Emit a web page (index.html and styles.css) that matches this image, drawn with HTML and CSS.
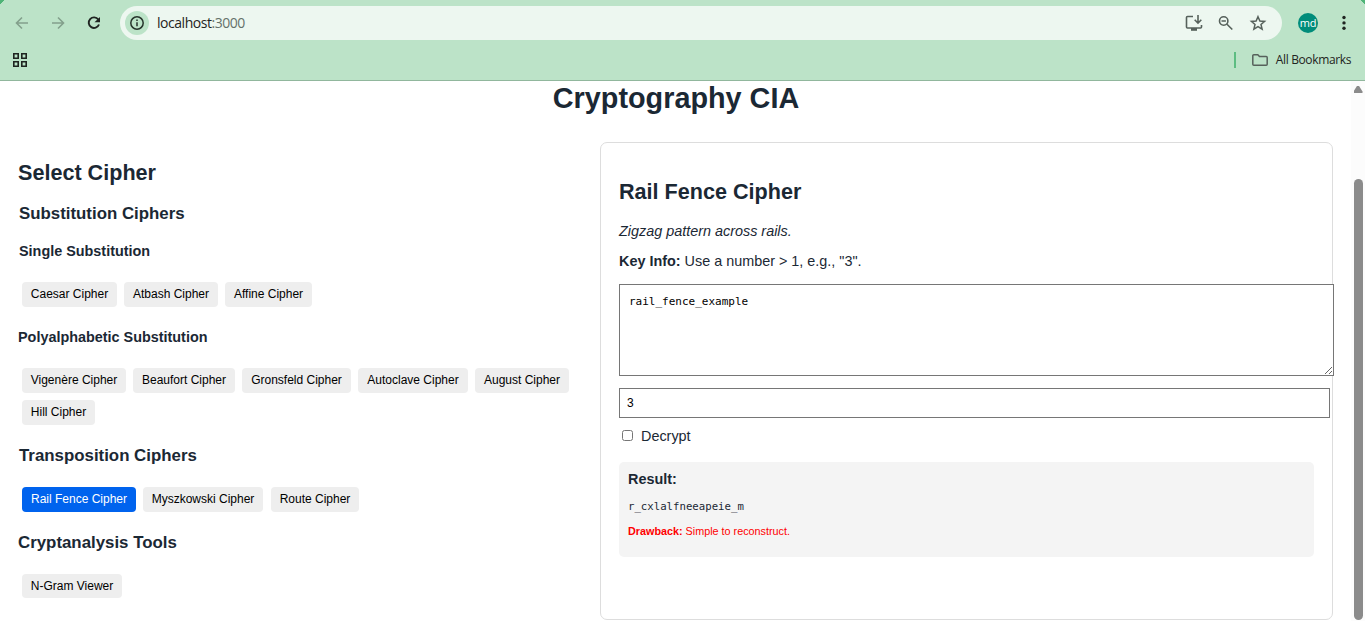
FILE: index.html
```html
<!DOCTYPE html>
<html lang="en">
<head>
<meta charset="utf-8">
<title>Cryptography CIA</title>
<link rel="stylesheet" href="styles.css">
</head>
<body>
<header class="browser">
  <div class="toolbar">
    <svg class="nav-icons" width="120" height="46" viewBox="0 0 120 46" fill="none">
      <path d="M28 23H17M22 17.5L16.5 23l5.500 5.500" stroke="#83a08c" stroke-width="1.600"/>
      <path d="M52 23h11M58 17.500l5.500 5.500-5.500 5.500" stroke="#83a08c" stroke-width="1.600"/>
      <path d="M98.300 19.500A5.300 5.300 0 1 0 99 24.500" stroke="#1f2421" stroke-width="1.900"/>
      <path d="M100 17v5.300h-5.500z" fill="#1f2421"/>
    </svg>
    <div class="address">
      <span class="info"><svg width="16" height="16" viewBox="0 0 16 16" fill="none" stroke="#26332b" stroke-width="1.500"><circle cx="8" cy="8" r="6.200"/><path d="M8 7.200v4M8 4.500v1.500"/></svg></span>
      <span class="url">localhost<span class="port">:3000</span></span>
      <svg class="address-icons" width="96" height="34" viewBox="0 0 96 34" fill="none" stroke="#56615b" stroke-width="1.600">
        <path d="M13 10.500H7.500a1 1 0 0 0-1 1v9.500a1 1 0 0 0 1 1h13a1 1 0 0 0 1-1V19M18 9v8M14.700 13.700l3.300 3.500 3.300-3.500"/>
        <path d="M11 22h6v2.800h-6z" fill="#56615b" stroke="none"/>
        <circle cx="43.700" cy="15" r="4.200"/><path d="M47 18.300l5.300 5.200M41.500 15h4.400"/>
        <path d="M78 10.700l1.900 4.300 4.700.4-3.600 3.100 1.100 4.600-4.100-2.500-4.100 2.500 1.100-4.600-3.600-3.100 4.700-.4z" stroke-width="1.500"/>
      </svg>
    </div>
    <span class="avatar">md</span>
    <svg class="more" width="6" height="16" viewBox="0 0 6 16" fill="#1f2421"><circle cx="3" cy="2.500" r="1.700"/><circle cx="3" cy="7.900" r="1.700"/><circle cx="3" cy="13.300" r="1.700"/></svg>
  </div>
  <div class="bookmarks">
    <svg width="14" height="14" viewBox="0 0 14 14" fill="none" stroke="#1f2421" stroke-width="1.600"><path d="M.8.800h4.400v4.400H.8zM8.800.800h4.400v4.400H8.800zM.8 8.800h4.400v4.400H.8zM8.800 8.800h4.400v4.400H8.800z"/></svg>
    <div class="all-bookmarks">
      <span class="divider"></span>
      <svg width="16" height="12" viewBox="0 0 16 12" fill="none" stroke="#56615b" stroke-width="1.500"><path d="M.8 1.800a1 1 0 0 1 1-1h4l1.700 1.700h6.700a1 1 0 0 1 1 1v6.700a1 1 0 0 1-1 1H1.800a1 1 0 0 1-1-1z"/></svg>
      <span class="bookmark-label">All Bookmarks</span>
    </div>
  </div>
</header>
<div class="viewport">
  <main class="app">
    <h1>Cryptography CIA</h1>
    <div class="columns">
      <section class="picker">
        <h2>Select Cipher</h2>
        <h3 class="subst">Substitution Ciphers</h3>
        <h4 class="single">Single Substitution</h4>
        <div class="buttons b1">
          <button class="w95">Caesar Cipher</button><button class="w94">Atbash Cipher</button><button class="w87">Affine Cipher</button>
        </div>
        <h4 class="poly">Polyalphabetic Substitution</h4>
        <div class="buttons b2">
          <button class="w104">Vigenère Cipher</button><button class="w102">Beaufort Cipher</button><button class="w109">Gronsfeld Cipher</button><button class="w110">Autoclave Cipher</button><button class="w94">August Cipher</button><button class="w73">Hill Cipher</button>
        </div>
        <h3 class="trans">Transposition Ciphers</h3>
        <div class="buttons b3">
          <button class="w114 active">Rail Fence Cipher</button><button class="w120">Myszkowski Cipher</button><button class="w88 route">Route Cipher</button>
        </div>
        <h3 class="tools">Cryptanalysis Tools</h3>
        <div class="buttons b4"><button class="w100">N-Gram Viewer</button></div>
      </section>
      <section class="panel">
        <h2 class="panel-title">Rail Fence Cipher</h2>
        <p class="description">Zigzag pattern across rails.</p>
        <p class="key-info"><strong>Key Info:</strong> Use a number &gt; 1, e.g., "3".</p>
        <textarea class="message" spellcheck="false">rail_fence_example</textarea>
        <input class="key" type="text" value="3">
        <label class="decrypt"><input type="checkbox"><span>Decrypt</span></label>
        <div class="result">
          <div class="result-title">Result:</div>
          <div class="output">r_cxlalfneeapeie_m</div>
          <div class="drawback"><strong>Drawback:</strong> Simple to reconstruct.</div>
        </div>
      </section>
    </div>
  </main>
  <div class="scrollbar"><span class="arrow"></span><span class="thumb"></span></div>
</div>
</body>
</html>
```
FILE: styles.css
```css
* { box-sizing: border-box; }
body { margin: 0; height: 621px; overflow: hidden; background: #fff; color: #1b2834; font-family: "Liberation Sans", Arial, sans-serif; }
h1, h2, h3, h4, p { margin: 0; white-space: nowrap; }

.browser { height: 81px; background: #bce3c8; border-bottom: 1px solid #91b79d; font-family: "Open Sans", "Noto Sans", sans-serif; background-image: linear-gradient(135deg, #4fb477 3px, transparent 3.500px), linear-gradient(225deg, #4fb477 3px, transparent 3.500px); }
.toolbar { display: flex; height: 46px; align-items: center; }
.nav-icons { flex: none; }
.address { display: flex; align-items: center; width: 1162px; height: 34px; border-radius: 17px; background: #edf7f0; padding-left: 5px; }
.info { display: flex; align-items: center; justify-content: center; width: 24px; height: 24px; border-radius: 50%; background: #bce3c8; }
.url { margin: -1px 0 0 8px; font-size: 14px; letter-spacing: -0.46px; color: #1f2421; }
.port { color: #65716a; }
.address-icons { margin-left: auto; margin-right: 6px; }
.avatar { width: 20px; height: 20px; margin-left: 16px; border-radius: 50%; background: #008c7a; color: #fff; font-size: 11px; line-height: 19px; text-align: center; letter-spacing: -0.3px; }
.more { margin-left: 23px; }
.bookmarks { display: flex; align-items: center; justify-content: space-between; height: 28px; padding: 0 14px 0 13px; }
.all-bookmarks { display: flex; align-items: center; }
.divider { width: 2px; height: 16px; background: #5dbd82; margin-right: 16px; }
.bookmark-label { margin: -1px 0 0 8px; font-size: 12px; letter-spacing: -0.37px; color: #1f2421; }

.viewport { display: flex; height: 540px; }
.app { width: 1351px; padding-left: 18px; }
h1 { margin-left: -17px; text-align: center; font-size: 28.800px; line-height: 34px; }
.columns { display: flex; margin-top: 27px; }
.picker { width: 582px; padding-top: 18px; flex: none; }
h2 { font-size: 21.600px; line-height: 26px; }
h3 { font-size: 16.850px; line-height: 20px; }
h4 { font-size: 14.400px; line-height: 18px; }
.subst { margin-top: 18px; }
.single { margin-top: 18px; }
.buttons { display: flex; flex-wrap: wrap; gap: 7px; padding-left: 4px; }
button { height: 25px; padding: 0 0 1px; border: 0; border-radius: 4px; background: #eee; color: #000; font: 12px "Liberation Sans", Arial, sans-serif; white-space: nowrap; }
button.active { background: #0063ee; color: #fff; }
.subst, .single, .trans { padding-left: 1px; }
.b1 { margin-top: 22px; }
.poly { margin-top: 21px; }
.b2 { margin-top: 22px; }
.trans { margin-top: 21px; }
.b3 { margin-top: 21px; }
.tools { margin-top: 21px; }
.b4 { margin-top: 21px; }
.b4 button { height: 24px; padding: 0; }
.route { margin-left: 1px; }
.w73 { width: 73px; }
.w87 { width: 87px; }
.w88 { width: 88px; }
.w94 { width: 94px; }
.w95 { width: 95px; }
.w100 { width: 100px; }
.w102 { width: 102px; }
.w104 { width: 104px; }
.w109 { width: 109px; }
.w110 { width: 110px; }
.w114 { width: 114px; }
.w120 { width: 120px; }

.panel { width: 733px; height: 478px; flex: none; border: 1px solid #ddd; border-radius: 7px; padding: 36px 0 0 18px; }
.description { margin-top: 16px; font-size: 14.400px; line-height: 20px; font-style: italic; }
.key-info { margin-top: 10px; font-size: 14.400px; line-height: 20px; }
.message { display: block; width: 715px; height: 92px; margin-top: 13px; padding: 10px 9px 9px; border: 1px solid #767676; border-radius: 0; background: #fff; color: #000; font: 11px/14px "DejaVu Sans Mono", monospace; outline: 0; }
.key { display: block; width: 711px; height: 30px; margin-top: 12px; padding: 0 7px; border: 1px solid #767676; background: #fff; color: #000; font: 12px "Liberation Sans", Arial, sans-serif; }
.decrypt { display: flex; align-items: center; height: 20px; margin-top: 8px; font-size: 14.400px; }
.decrypt input { width: 11px; height: 11px; margin: -1px 8px 0 3px; }
.result { width: 695px; height: 95px; margin-top: 16px; padding: 7px 9px; border-radius: 5px; background: #f4f4f4; }
.result-title { font-size: 14.400px; line-height: 20px; font-weight: bold; }
.output { margin-top: 11px; font: 10.700px/14px "DejaVu Sans Mono", monospace; }
.drawback { margin-top: 10px; color: #f00; font-size: 10.800px; line-height: 14px; }

.scrollbar { display: flex; flex-direction: column; align-items: center; width: 14px; padding-top: 5px; background: #fcfcfc; }
.arrow { width: 9px; height: 7px; background: #8b8b8b; clip-path: polygon(38% 0, 62% 0, 100% 80%, 100% 100%, 0 100%, 0 80%); }
.thumb { width: 9px; height: 441px; margin-top: 86px; border-radius: 5px; background: #8b8b8b; }
```
